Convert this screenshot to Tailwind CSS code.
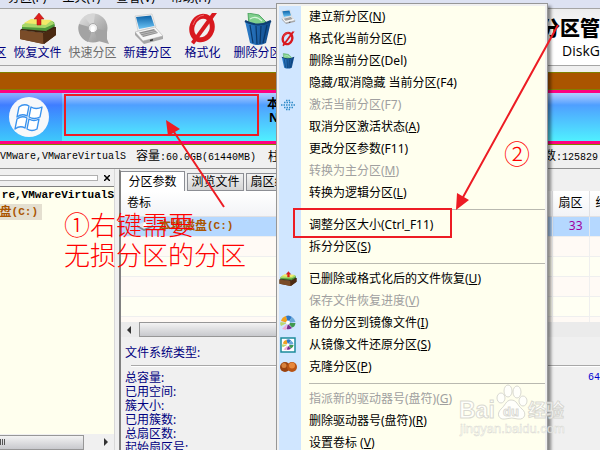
<!DOCTYPE html>
<html lang="zh-CN">
<head>
    <meta charset="UTF-8">
    <meta name="viewport" content="width=device-width, initial-scale=1.0">
    <title>DiskGenius</title>
    <script src="https://cdn.jsdelivr.net/npm/@tailwindcss/browser@4"></script>
</head>
<body class="relative flex h-screen flex-col overflow-hidden bg-[#f0f0f0] font-['Noto_Sans','Noto_Sans_CJK_SC',sans-serif] text-xs text-black">
    <!-- Shared icons -->
    <svg class="absolute size-0" aria-hidden="true">
        <defs>
            <linearGradient id="screen" x1="0" y1="0" x2="0" y2="1"><stop offset="0" stop-color="#0b62a8"/><stop offset="1" stop-color="#6cc4f5"/></linearGradient>
            <linearGradient id="metal" x1="0" y1="0" x2="1" y2="1"><stop offset="0" stop-color="#e4e4e4"/><stop offset="1" stop-color="#8f8f8f"/></linearGradient>
            <linearGradient id="bin" x1="0" y1="0" x2="1" y2="0"><stop offset="0" stop-color="#2f80cc"/><stop offset="1" stop-color="#0d4788"/></linearGradient>
        </defs>
        <symbol id="i-restore" viewBox="0 0 38 32">
            <path d="M1 17 24 20 37 14 37 22 25 31 1 26Z" fill="#5a3418"/>
            <path d="M1 17 24 20 24 31 1 26Z" fill="#7a4c28"/>
            <path d="M24 20 37 14 37 22 25 31Z" fill="#4b2a12"/>
            <path d="M1 17 8 12 34 12 37 15 24 20Z" fill="#3c2410"/>
            <path d="M3 13 10 8 35 9 36 13 27 18 3 16Z" fill="#4f9a3c"/>
            <path d="M3 12 11 7 34 8 35 11 26 15 3 14Z" fill="#a9d868"/>
            <path d="M5 10 12 6 33 7 27 12Z" fill="#f3ea6a"/>
            <path d="M18 12V6h-3l5-6 5 6h-3v6Z" fill="#e0201c" stroke="#9c1010" stroke-width=".5"/>
        </symbol>
        <symbol id="i-disc" viewBox="0 0 38 32">
            <circle cx="19" cy="15" r="14.500" fill="url(#metal)"/>
            <path d="M19 15 5 11A14.500 14.500 0 0 0 14 29ZM19 15 33 18 33 26 35 31 28 29 24 28Z" fill="#a3a3a3"/>
            <path d="M19 15 10 3.500A14.500 14.500 0 0 1 21 1Z" fill="#d6d6d6"/>
            <circle cx="19" cy="15" r="4.500" fill="#efefef" stroke="#a8a8a8"/>
            <path d="M17 15a2 2 0 0 1 4 0l-1 4h-3Z" fill="#fff"/>
        </symbol>
        <symbol id="i-laptop" viewBox="0 0 38 32">
            <path d="M6 3 23 1 27 14 9 18Z" fill="#f2f2f2" stroke="#c2c2c2" stroke-width=".6"/>
            <path d="M7 4 22 2.500 25.500 13 10 16Z" fill="url(#screen)"/>
            <path d="M6 19 26 14 34 23 14 28Z" fill="#f7f7f7" stroke="#b5b5b5" stroke-width=".6"/>
            <path d="M10 19.500 25 16 29 20 14 24Z" fill="#8d8d8d"/>
            <path d="M11 21 27 17.500M13 22.500 28 19" stroke="#d8d8d8" stroke-width=".6"/>
            <path d="M14 28 34 23 34 26 15 31 6 22 6 19Z" fill="#a7a7a7"/>
            <path d="M21 27.500 24 26.800" stroke="#333" stroke-width="1.500"/>
        </symbol>
        <symbol id="i-format" viewBox="0 0 38 32">
            <ellipse cx="18" cy="15" rx="10" ry="12" fill="none" stroke="#d8191f" stroke-width="5" transform="rotate(20 18 15)"/>
            <path d="M33 0 28 0 7 29 10 31.500Z" fill="#d8191f"/>
            <path d="M9 12Q12 3 20 2" fill="none" stroke="#f0676a" stroke-width="1"/>
        </symbol>
        <symbol id="i-trash" viewBox="0 0 38 32">
            <path d="M9 0 20 2 27 9 23 13 10 13Z" fill="#7fcf8c" stroke="#3f9a53" stroke-width=".8"/>
            <path d="M11 6q6-4 12 2" fill="none" stroke="#d6f5da" stroke-width="1.200"/>
            <path d="M6 8Q19 15 32 8L27 30Q19 34 11 30Z" fill="url(#bin)"/>
            <path d="M11 12 14 30M17 13 18 31M22 13 21 31M28 12 24 30" stroke="#0a3868" stroke-width="1.200"/>
            <path d="M6 8Q19 15 32 8" fill="none" stroke="#0f3f73" stroke-width="2"/>
        </symbol>
        <symbol id="i-wheel" viewBox="0 0 16 16">
            <path d="M8 8 1 6Q2 2 6 1Z" fill="#f0a020"/>
            <path d="M8 8 6 1Q9-.5 12 2Z" fill="#2d78c8"/>
            <path d="M8 8 12 2Q15 4 15.500 7Z" fill="#6aa8d8"/>
            <path d="M8 8 15.500 8Q15 12 12 12.500Z" fill="#3f9a50"/>
            <path d="M8 9 12 13Q9 15 6.500 14Z" fill="#7a2f8c"/>
            <path d="M7 9 6 15 2 14Z" fill="#f1a8d0"/>
            <path d="M7 8 1 11Q-.5 9 .5 7Z" fill="#b8d870"/>
            <circle cx="8" cy="7.500" r="2" fill="#fff"/>
        </symbol>
    </svg>

    <!-- Menu bar -->
    <nav class="flex h-2 shrink-0 items-end gap-4 overflow-hidden bg-[#dde2f2] pb-1 pl-2 leading-3">
        <a href="#">分区(P)</a>
        <a href="#">工具(T)</a>
        <a href="#">查看(V)</a>
        <a href="#">帮助(H)</a>
    </nav>

    <!-- Toolbar -->
    <header class="flex h-[58px] shrink-0 overflow-hidden border-y border-[#a5a5a5] text-[#000080]">
        <button class="-ml-[45px] flex w-[55px] shrink-0 flex-col items-center justify-end whitespace-nowrap pb-1 leading-4">保存分区</button>
        <button class="flex w-[55px] shrink-0 flex-col items-center justify-end whitespace-nowrap pb-1 leading-4">
            <svg class="h-8 w-[38px]"><use href="#i-restore"/></svg>恢复文件
        </button>
        <button class="flex w-[55px] shrink-0 flex-col items-center justify-end whitespace-nowrap pb-1 leading-4 text-[#6d6d6d]" disabled>
            <svg class="h-8 w-[38px]"><use href="#i-disc"/></svg>快速分区
        </button>
        <button class="flex w-[55px] shrink-0 flex-col items-center justify-end whitespace-nowrap pb-1 leading-4">
            <svg class="h-8 w-[38px]"><use href="#i-laptop"/></svg>新建分区
        </button>
        <button class="flex w-[55px] shrink-0 flex-col items-center justify-end whitespace-nowrap pb-1 leading-4">
            <svg class="h-8 w-[38px]"><use href="#i-format"/></svg>格式化
        </button>
        <button class="flex w-[55px] shrink-0 flex-col items-center justify-end whitespace-nowrap pb-1 leading-4">
            <svg class="h-8 w-[38px]"><use href="#i-trash"/></svg>删除分区
        </button>
        <div class="ml-auto flex shrink-0 flex-col items-end bg-linear-to-b from-[#ededed] to-white to-50% pt-2 text-black">
            <strong class="text-xl leading-6 font-black">分区管</strong>
            <span class="font-['Open_Sans',sans-serif] text-sm leading-5">DiskG</span>
        </div>
    </header>

    <!-- Disk map -->
    <section class="mt-1.5 shrink-0">
        <div class="h-[18px] border-y border-[#808000] bg-[#aa5500]"></div>
        <div class="flex h-[54px] border-y-3 border-[#ff0080]">
            <div class="flex w-[62px] shrink-0 items-center justify-center bg-linear-to-b from-[#8fb0ff] via-[#3f7dff] via-25% to-[#3fc8fb] pr-1">
                <svg class="size-10" viewBox="0 0 40 40">
                    <circle cx="20" cy="20" r="20" fill="#f7f8fa"/>
                    <g fill="#fff" stroke="#3a92ee" stroke-width="1.300" stroke-linejoin="round">
                        <path d="M10 10Q15 6 20 9L18 19Q13 16 8 20Z"/>
                        <path d="M22 10Q27 13 33 10L31 20Q25 23 20 20Z"/>
                        <path d="M8 22Q13 18 18 21L16 31Q11 28 6 32Z"/>
                        <path d="M20 22Q25 25 30 22L28 32Q23 35 18 32Z"/>
                    </g>
                </svg>
            </div>
            <div class="flex min-w-0 grow flex-col overflow-hidden bg-linear-to-b from-[#b4ceff] via-[#4f9fff] via-25% to-[#50f0ff] pt-1 pl-[205px] font-bold leading-[14px]">
                <span>本地磁盘(C:)</span>
                <span class="pl-0.5">NTFS</span>
            </div>
        </div>
        <div class="h-px bg-[#808000]"></div>
    </section>

    <!-- Disk info line -->
    <section class="flex h-6 shrink-0 items-center overflow-hidden border-b border-[#909090] whitespace-nowrap">
        <span class="font-['Liberation_Mono',monospace] text-[10px]">VMware,VMwareVirtualS</span>
        <span class="ml-2.5">容量<span class="font-['Liberation_Mono',monospace] text-[10px]">:60.0GB(61440MB)</span></span>
        <span class="ml-3">柱面</span>
        <span class="ml-auto pr-0.5">数<span class="font-['Liberation_Mono',monospace] text-[10px]">:125829</span></span>
    </section>

    <main class="flex min-h-0 grow">
        <!-- Disk tree -->
        <aside class="flex w-[115px] shrink-0 flex-col border-r border-[#d8d8d8]">
            <div class="flex h-[17px] shrink-0 items-center gap-1 pr-0.5">
                <div class="h-1.5 grow border border-l-0 border-[#b0b0b0] bg-white"></div>
                <button class="flex size-2.5 items-center justify-center" aria-label="关闭">
                    <svg class="size-1.5" viewBox="0 0 6 6"><path d="M0 0 6 6M6 0 0 6" stroke="#000" stroke-width="1.500"/></svg>
                </button>
            </div>
            <div class="flex grow flex-col items-start overflow-hidden border-t border-[#808080] bg-[#ffffee]">
                <div class="self-end font-['Liberation_Mono',monospace] text-[11px] leading-[17px] font-bold">re,VMwareVirtualS</div>
                <div class="flex h-4 w-[42px] items-center justify-end bg-[#e4dfd0] pr-1 font-bold whitespace-nowrap text-[#aa5500]">盘<span class="font-['Liberation_Mono',monospace] text-[11px]">(C:)</span></div>
            </div>
            <div class="flex h-4 shrink-0 items-center">
                <div class="flex h-[15px] w-[84px] items-center gap-px border border-l-0 border-[#979797] bg-linear-to-b from-[#f3f3f3] to-[#c8c9cd]">
                    <i class="h-1.5 w-px bg-[#555]"></i>
                    <i class="h-1.5 w-px bg-[#555]"></i>
                    <i class="h-1.5 w-px bg-[#555]"></i>
                </div>
                <svg class="ml-5 h-2 w-1" viewBox="0 0 4 8"><path d="M0 0 4 4 0 8Z" fill="#333"/></svg>
            </div>
        </aside>

        <!-- Partition details -->
        <section class="ml-1 flex min-w-0 grow flex-col border-t-2 border-l-2 border-[#808080] border-t-[#f0f0f0]">
            <div class="flex h-5 shrink-0 items-end gap-0.5 overflow-hidden whitespace-nowrap" role="tablist">
                <button class="h-5 w-16 shrink-0 border-t border-r border-[#8c8e94] bg-white" role="tab" aria-selected="true">分区参数</button>
                <button class="h-[18px] w-[57px] shrink-0 border border-[#8c8e94] bg-linear-to-b from-[#f2f2f2] to-[#d4d4d4]" role="tab">浏览文件</button>
                <button class="h-[18px] w-[57px] shrink-0 border border-[#8c8e94] bg-linear-to-b from-[#f2f2f2] to-[#d4d4d4]" role="tab">扇区编辑</button>
            </div>
            <div class="h-[131px] shrink-0 overflow-hidden bg-[#fffaf5]">
                <table class="w-full table-fixed border-collapse">
                    <colgroup>
                        <col>
                        <col class="w-[37px]">
                        <col class="w-[11px]">
                    </colgroup>
                    <thead>
                        <tr class="h-[25px] bg-linear-to-b from-white to-[#f2f3f6]">
                            <th class="border-r border-b border-[#e0e0e3] p-0 pl-1.5 text-left font-normal">卷标</th>
                            <th class="border-r border-b border-[#e0e0e3] p-0 font-normal">扇区</th>
                            <th class="overflow-hidden border-b border-[#e0e0e3] p-0 pl-1.5 text-left font-normal whitespace-nowrap">终</th>
                        </tr>
                    </thead>
                    <tbody>
                        <tr class="h-5 bg-[#b5d8ff] font-bold text-[#aa5500]">
                            <td class="border-r border-[#e3e9f0] p-0 pl-4">
                                <div class="flex items-center">
                                    <svg class="mr-1.5 h-2.5 w-4" viewBox="0 0 16 10"><path d="M0 4 9 0 16 4 7 8Z" fill="#e3e6ea"/><path d="M0 4 7 8 16 4 16 6 7 10 0 6Z" fill="#85888c"/><circle cx="8" cy="4" r="2" fill="#fff"/></svg>
                                    本地磁盘<span class="font-['Liberation_Mono',monospace] text-[11px]">(C:)</span>
                                </div>
                            </td>
                            <td class="border-r border-[#e3e9f0] p-0 pr-1.5 text-right font-normal text-[#a000a0]">33</td>
                            <td class="p-0"></td>
                        </tr>
                        <tr class="h-5 bg-[#fffaf5]"><td class="border border-l-0 border-[#efefef]"></td><td class="border border-[#efefef]"></td><td class="border border-r-0 border-[#efefef]"></td></tr>
                        <tr class="h-5 bg-[#fffff3]"><td class="border border-l-0 border-[#efefef]"></td><td class="border border-[#efefef]"></td><td class="border border-r-0 border-[#efefef]"></td></tr>
                        <tr class="h-5 bg-[#fffaf5]"><td class="border border-l-0 border-[#efefef]"></td><td class="border border-[#efefef]"></td><td class="border border-r-0 border-[#efefef]"></td></tr>
                        <tr class="h-5 bg-[#fffff3]"><td class="border border-l-0 border-[#efefef]"></td><td class="border border-[#efefef]"></td><td class="border border-r-0 border-[#efefef]"></td></tr>
                        <tr class="h-5 bg-[#fffaf5]"><td class="border-r border-[#efefef]"></td><td class="border-r border-[#efefef]"></td><td></td></tr>
                    </tbody>
                </table>
            </div>
            <div class="flex h-[15px] shrink-0 items-center bg-[#ebebeb] pl-1.5">
                <svg class="mr-2 h-2 w-1" viewBox="0 0 4 8"><path d="M4 0 0 4 4 8Z" fill="#333"/></svg>
                <div class="h-[15px] w-1/2 border border-[#979797] bg-linear-to-b from-[#f3f3f3] to-[#c8c9cd]"></div>
            </div>
            <div class="flex grow flex-col overflow-hidden text-[#000080]">
                <div class="px-1 pt-2 leading-4">文件系统类型:</div>
                <div class="mt-1 ml-2.5 h-0.5 shrink-0 border-t border-[#a8a8a8] bg-white"></div>
                <div class="flex px-1 pt-1 leading-[14px]">
                    <div class="grow">
                        <div>总容量:</div>
                        <div>已用空间:</div>
                        <div>簇大小:</div>
                        <div>已用簇数:</div>
                        <div>总扇区数:</div>
                        <div>起始扇区号:</div>
                    </div>
                    <span class="-mr-1 font-['Liberation_Mono',monospace] text-[10px] text-[#0000d0]">64</span>
                </div>
            </div>
        </section>
    </main>

    <!-- Context menu -->
    <div class="absolute top-[3px] bottom-0 left-[276px] flex w-[272px] overflow-hidden border border-b-0 border-[#979797] bg-[#f0f0f0] px-0.5 pt-0.5 shadow-[3px_3px_3px_rgba(0,0,0,0.45)]" role="menu">
        <div class="flex w-full flex-col self-start bg-linear-to-r from-[#d0e6ff] from-[22px] to-[#ffffee] to-[22px] whitespace-nowrap">
            <button class="flex h-[22px] items-center" role="menuitem"><svg class="mr-3 h-4 w-[18px]"><use href="#i-laptop"/></svg><span>建立新分区(<u>N</u>)</span></button>
            <button class="flex h-[22px] items-center" role="menuitem"><svg class="mr-3 h-4 w-[18px]"><use href="#i-format"/></svg><span>格式化当前分区(<u>F</u>)</span></button>
            <button class="flex h-[22px] items-center" role="menuitem"><svg class="mr-3 h-4 w-[18px]"><use href="#i-trash"/></svg><span>删除当前分区(Del)</span></button>
            <button class="flex h-[22px] items-center pl-[30px]" role="menuitem">隐藏/取消隐藏 当前分区(F4)</button>
            <button class="flex h-[22px] items-center text-[#a0a0a0]" role="menuitem" disabled>
                <svg class="mr-3 h-4 w-[18px]" viewBox="0 0 18 16"><path d="M2 8H17M5 5.500H14M5 10.500H14M7 3.500H12M7 12.500H12" stroke="#2d8ac8" stroke-width="1.500" stroke-dasharray="1.500 1"/></svg><span>激活当前分区(F7)</span>
            </button>
            <button class="flex h-[22px] items-center pl-[30px]" role="menuitem">取消分区激活状态(<u>A</u>)</button>
            <button class="flex h-[22px] items-center pl-[30px]" role="menuitem">更改分区参数(F11)</button>
            <button class="flex h-[22px] items-center pl-[30px] text-[#a0a0a0]" role="menuitem" disabled>转换为主分区(<u>M</u>)</button>
            <button class="flex h-[22px] items-center pl-[30px]" role="menuitem">转换为逻辑分区(<u>L</u>)</button>
            <div class="flex h-2.5 items-center pl-[30px]"><hr class="grow border-[#b9b9b0]"></div>
            <button class="flex h-[22px] items-center pl-[30px]" role="menuitem">调整分区大小(Ctrl_F11)</button>
            <button class="flex h-[22px] items-center pl-[30px]" role="menuitem">拆分分区(<u>S</u>)</button>
            <div class="flex h-2.5 items-center pl-[30px]"><hr class="grow border-[#b9b9b0]"></div>
            <button class="flex h-[22px] items-center" role="menuitem"><svg class="mr-3 h-4 w-[18px]"><use href="#i-restore"/></svg><span>已删除或格式化后的文件恢复(<u>U</u>)</span></button>
            <button class="flex h-[22px] items-center pl-[30px] text-[#a0a0a0]" role="menuitem" disabled>保存文件恢复进度(<u>V</u>)</button>
            <button class="flex h-[22px] items-center" role="menuitem"><svg class="mr-3 h-4 w-[18px]"><use href="#i-wheel"/></svg><span>备份分区到镜像文件(<u>I</u>)</span></button>
            <button class="flex h-[22px] items-center" role="menuitem">
                <svg class="mr-3 h-4 w-[18px]" viewBox="0 0 18 16"><path d="M2 1H16V15H2Z" fill="#fff" stroke="#1c8c9c" stroke-width="1.500"/><use href="#i-wheel" x="3" y="2" width="12" height="12"/></svg><span>从镜像文件还原分区(<u>S</u>)</span>
            </button>
            <button class="flex h-[22px] items-center" role="menuitem">
                <svg class="mr-3 h-4 w-[18px]" viewBox="0 0 18 16"><circle cx="6" cy="8" r="5" fill="#9a4310"/><circle cx="5" cy="6.500" r="2.500" fill="#d8823c"/><circle cx="13" cy="8" r="5" fill="#b85414"/><circle cx="13" cy="6.500" r="3" fill="#e8883c"/></svg><span>克隆分区(<u>P</u>)</span>
            </button>
            <div class="flex h-2.5 items-center pl-[30px]"><hr class="grow border-[#b9b9b0]"></div>
            <button class="flex h-[22px] items-center pl-[30px] text-[#a0a0a0]" role="menuitem" disabled>指派新的驱动器号(盘符)(<u>G</u>)</button>
            <button class="flex h-[22px] items-center pl-[30px]" role="menuitem">删除驱动器号(盘符)(<u>R</u>)</button>
            <button class="flex h-[22px] items-center pl-[30px]" role="menuitem">设置卷标 (<u>V</u>)</button>
        </div>
    </div>

    <!-- Tutorial marks drawn over the window -->
    <svg class="pointer-events-none absolute top-0 left-0 h-[450px] w-[600px]" viewBox="0 0 600 450">
        <g fill="none" stroke="#ed1c24" stroke-width="2">
            <rect x="65" y="95" width="193" height="40"/>
            <rect x="294" y="209" width="157" height="28"/>
            <path d="M172 129 224 207M558 25 462 199"/>
        </g>
        <path d="M166 120 180 129 168 136ZM456 210 457 193 469 200Z" fill="#ed1c24"/>
        <g fill="#ff0000" font-family="Noto Sans CJK SC, sans-serif" font-weight="300">
            <text x="64" y="235" font-size="26">①右键需要</text>
            <text x="64" y="265" font-size="26">无损分区的分区</text>
            <text x="504" y="164" font-size="26">②</text>
        </g>
        <!-- Site watermark -->
        <g fill="#fff" fill-opacity=".75" stroke="#c9c9c2" stroke-opacity=".7" stroke-width="1" font-family="Liberation Sans, Noto Sans CJK SC, sans-serif" font-weight="700">
            <text x="459" y="418" font-size="23">Bai</text>
            <ellipse cx="501" cy="398" rx="4" ry="5"/>
            <ellipse cx="508" cy="391" rx="4" ry="6"/>
            <ellipse cx="517" cy="392" rx="4" ry="6"/>
            <ellipse cx="523" cy="401" rx="4" ry="5"/>
            <path d="M511 400C506 400 505 406 501 409C496 414 499 420 505 419Q512 417 518 419C525 420 527 413 522 409C517 405 517 400 511 400Z"/>
            <text x="503" y="416" font-size="13">du</text>
            <text x="528" y="417" font-size="18">经验</text>
            <text x="460" y="433" font-size="13" font-weight="400" stroke-width=".5">jingyan.baidu.com</text>
        </g>
    </svg>
</body>
</html>
